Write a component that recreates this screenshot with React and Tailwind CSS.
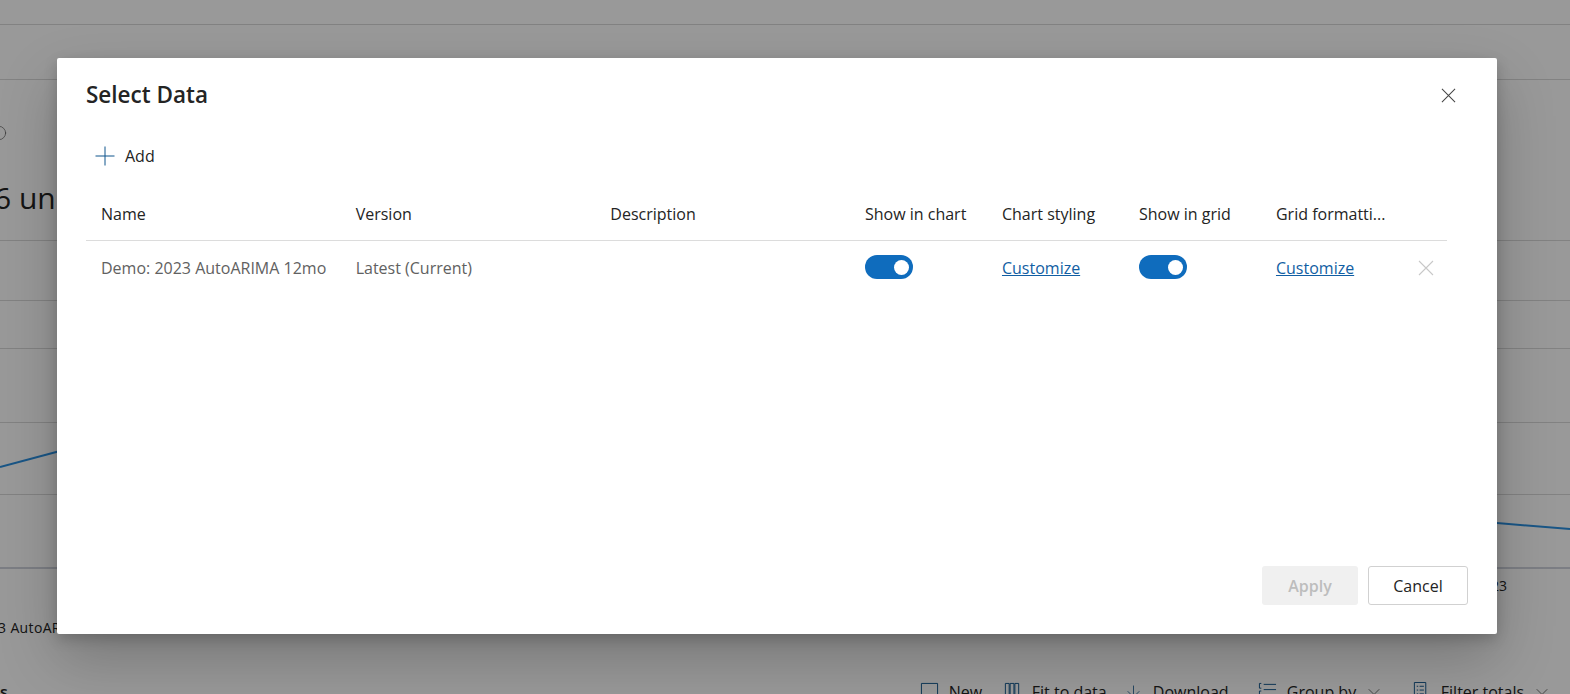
import { ChevronDown, ArrowDown, Info } from 'lucide-react'

const FONT = "font-['Open_Sans','Noto_Sans',sans-serif]"
const COLS = 'grid grid-cols-[254.67px_254.67px_254.66px_137px_137px_137px_137px_34px]'

function Toggle() {
  return (
    <div className="-mt-[2px] flex h-6 w-12 items-center justify-end rounded-full bg-[#0f6cbd] pr-[4px]">
      <div className="size-[15px] rounded-full bg-white" />
    </div>
  )
}

function ThinX({ className }) {
  return (
    <svg viewBox="0 0 16 16" fill="none" stroke="currentColor" strokeWidth="1.1" className={className}>
      <path d="M1 1l14 14M15 1L1 15" />
    </svg>
  )
}

const NewIcon = (p) => (
  <svg viewBox="0 0 20 20" fill="none" stroke="currentColor" strokeWidth="1" {...p}>
    <path d="M1.500 1.500h17v12l-5 5h-12z" />
  </svg>
)
const FitIcon = (p) => (
  <svg viewBox="0 0 20 20" fill="none" stroke="currentColor" strokeWidth="1" {...p}>
    <path d="M2.500 1.500h4v17h-4zM7.500 1.500h4v17h-4zM12.500 1.500h4v17h-4z" />
  </svg>
)
const GroupIcon = (p) => (
  <svg viewBox="0 0 20 20" fill="none" stroke="currentColor" strokeWidth="1" {...p}>
    <path d="M3.500 1.500h-2v5h2M3.500 9.500h-2v6h2M6 2.500h13M6 8h13M6 13.500h13" />
  </svg>
)
const FilterIcon = (p) => (
  <svg viewBox="0 0 20 20" fill="none" stroke="currentColor" strokeWidth="1" {...p}>
    <path d="M2.500 0.500h12v17h-12zM5 4.500h1.500M8 4.500h4.500M5 8.500h1.500M8 8.500h4.500M5 12.500h1.500M8 12.500h4.500M12 18.500h7" />
  </svg>
)

function ToolItem({ icon: Icon, label, chevron, className }) {
  return (
    <div className={`flex items-center ${className}`}>
      <Icon width={19} height={19} strokeWidth={1} className="mr-[10px] shrink-0 text-[#0f548c]" />
      <span>{label}</span>
      {chevron && <ChevronDown size={20} strokeWidth={0.9} className="ml-[8px] text-[#444]" />}
    </div>
  )
}

function Background() {
  return (
    <div className="h-[694px] overflow-hidden bg-white text-[#242424]">
      <div className="h-[24.5px] border-b border-[#d9d9d9]" />
      <div className="h-[55px] border-b border-[#d9d9d9]" />
      <div className="flex h-[45px] items-center" />
      <div className="flex h-[16px] items-center">
        <Info size={16} strokeWidth={1} className="-ml-[9px] text-[#555]" />
      </div>
      <div className="h-[100px] border-b border-[#d9d9d9] pt-[37px] text-[30px] leading-[40px]">
        <span className="-ml-[6px] block whitespace-nowrap">6 units</span>
      </div>
      <div className="relative">
        <div className="h-[60px] border-b border-[#d9d9d9]" />
        <div className="h-[48px] border-b border-[#d9d9d9]" />
        <div className="h-[74px] border-b border-[#d9d9d9]" />
        <div className="h-[72px] border-b border-[#d9d9d9]" />
        <div className="h-[74px] border-b-2 border-[#cfd3dc]" />
        <svg className="absolute inset-0 h-full w-full" viewBox="0 0 1570 328" preserveAspectRatio="none" fill="none">
          <path d="M0 226L60 210" stroke="#2b8fe0" strokeWidth="2" />
          <path d="M1497 282L1570 288" stroke="#2b8fe0" strokeWidth="2" />
        </svg>
      </div>
      <div className="flex h-[35px] items-center justify-end pr-[63px] text-sm">
        <span>2023</span>
      </div>
      <div className="mt-[12px] h-[24px] text-sm leading-[24px]">
        <span className="-ml-[27px] block whitespace-nowrap tracking-wide">2023 AutoARIMA 12mo</span>
      </div>
      <div className="mt-[37px] flex h-[30px] items-center text-base">
        <span className="font-semibold">s</span>
        <div className="ml-[912px] flex items-center whitespace-nowrap">
          <ToolItem icon={NewIcon} label="New" className="w-[83px]" />
          <ToolItem icon={FitIcon} label="Fit to data" className="w-[121px]" />
          <ToolItem icon={ArrowDown} label="Download" className="w-[134px]" />
          <ToolItem icon={GroupIcon} label="Group by" chevron className="w-[154px]" />
          <ToolItem icon={FilterIcon} label="Filter totals" chevron />
        </div>
      </div>
    </div>
  )
}

export default function App() {
  return (
    <div className={`relative h-[694px] overflow-hidden ${FONT}`}>
      <Background />
      <div className="absolute inset-0 bg-black/40 pt-[58px] pl-[57px]">
        <div className="flex h-[576px] w-[1440px] flex-col rounded-[2px] bg-white px-[29px] pb-[29px] text-[#242424] shadow-[0_25px_58px_rgba(0,0,0,0.22),0_5px_14px_rgba(0,0,0,0.18)]">
          <div className="flex h-[74px] items-center justify-between pr-[12px]">
            <h2 className="text-[22.5px] font-semibold">Select Data</h2>
            <ThinX className="size-[15px] text-[#444]" />
          </div>
          <div className="flex h-[48px] items-center pl-[9px]">
            <svg viewBox="0 0 20 20" fill="none" stroke="#0f548c" strokeWidth="1" className="mr-[10px] size-[20px]">
              <path d="M10 0.500v19M0.500 10h19" />
            </svg>
            <span className="text-base">Add</span>
          </div>
          <div className={`${COLS} mr-[21px] h-[61px] items-center border-b border-[#dcdcdc] pl-[15px] pt-[8px] text-base font-medium`}>
            <div>Name</div>
            <div>Version</div>
            <div>Description</div>
            <div>Show in chart</div>
            <div>Chart styling</div>
            <div>Show in grid</div>
            <div>Grid formatti...</div>
            <div />
          </div>
          <div className={`${COLS} mr-[21px] h-[54px] items-center pl-[15px] text-base text-[#616161]`}>
            <div className="whitespace-nowrap">Demo: 2023 AutoARIMA 12mo</div>
            <div>Latest (Current)</div>
            <div />
            <Toggle />
            <a href="#" className="text-[#115ea3] underline">Customize</a>
            <Toggle />
            <a href="#" className="text-[#115ea3] underline">Customize</a>
            <div className="flex pl-[5px]">
              <ThinX className="size-4 text-[#c8c8c8]" />
            </div>
          </div>
          <div className="flex flex-1 items-end justify-end gap-[10px]">
            <button className="h-[39px] w-[96px] rounded-[3px] bg-[#f0f0f0] text-base font-semibold text-[#bdbdbd]">Apply</button>
            <button className="h-[39px] w-[100px] rounded-[3px] border border-[#d1d1d1] bg-white text-base font-medium text-[#242424]">Cancel</button>
          </div>
        </div>
      </div>
    </div>
  )
}
